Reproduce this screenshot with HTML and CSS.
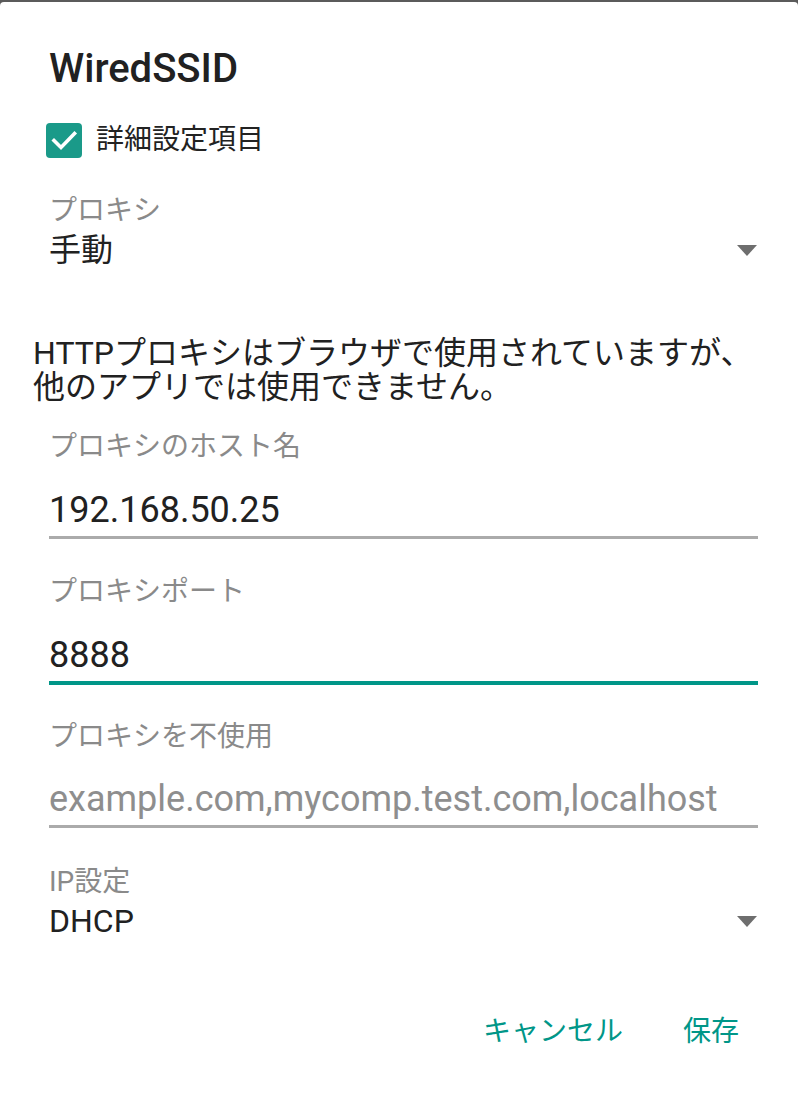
FILE: index.html
```html
<!DOCTYPE html>
<html lang="ja">
<head>
<meta charset="utf-8">
<title>WiredSSID</title>
<link rel="stylesheet" href="styles.css">
</head>
<body>
<div class="dialog">
  <h1 class="title">WiredSSID</h1>

  <label class="check-row">
    <span class="checkbox">
      <svg viewBox="0 0 36 36" width="36" height="36"><path d="M8 18.5 L15 25.5 L28.5 11.5" fill="none" stroke="#fff" stroke-width="3.6" stroke-linecap="square"/></svg>
    </span>
    <span class="check-label">詳細設定項目</span>
  </label>

  <div class="label label-proxy">プロキシ</div>
  <div class="spinner">
    <span class="spinner-value">手動</span>
    <span class="arrow"></span>
  </div>

  <div class="desc">
    <div class="desc-line">HTTPプロキシはブラウザで使用されていますが、</div>
    <div class="desc-line">他のアプリでは使用できません。</div>
  </div>

  <div class="label label-host">プロキシのホスト名</div>
  <div class="field field-host">192.168.50.25</div>

  <div class="label label-port">プロキシポート</div>
  <div class="field field-port focused">8888</div>

  <div class="label label-bypass">プロキシを不使用</div>
  <div class="field field-bypass hint">example.com,mycomp.test.com,localhost</div>

  <div class="label label-ip">IP設定</div>
  <div class="spinner spinner-ip">
    <span class="spinner-value">DHCP</span>
    <span class="arrow"></span>
  </div>

  <div class="buttons">
    <span class="btn">キャンセル</span>
    <span class="btn">保存</span>
  </div>
</div>
</body>
</html>
```

FILE: styles.css
```css
html, body {
  margin: 0;
  padding: 0;
}
body {
  background: #5b5b5b;
  font-family: Roboto, "Noto Sans CJK JP", sans-serif;
  color: #212121;
}
.dialog {
  margin-top: 2px;
  background: #ffffff;
  border-top-left-radius: 4px;
  border-top-right-radius: 4px;
  min-height: 1099px;
  box-sizing: border-box;
  padding: 0 40px 0 49px;
  display: flex;
  flex-direction: column;
  overflow: hidden;
}
.title {
  margin: 43px 0 0 0;
  font-size: 40px;
  line-height: 48px;
  font-weight: 500;
  color: #212121;
}
.check-row {
  margin-top: 29px;
  margin-left: -3px;
  display: flex;
  align-items: center;
  height: 36px;
}
.checkbox {
  width: 36px;
  height: 35px;
  border-radius: 4px;
  background: #1a9a89;
  display: flex;
  align-items: center;
  justify-content: center;
}
.checkbox svg {
  display: block;
}
.check-label {
  margin-left: 14px;
  font-size: 28px;
  line-height: 32px;
  color: #222222;
}
.label {
  font-size: 28px;
  line-height: 32px;
  color: #8a8a8a;
}
.label-proxy { margin-top: 37px; }
.spinner {
  margin-top: 3px;
  display: flex;
  align-items: center;
  justify-content: space-between;
  height: 40px;
}
.spinner-value {
  font-size: 32px;
  line-height: 40px;
  color: #212121;
}
.arrow {
  width: 0;
  height: 0;
  border-left: 10px solid transparent;
  border-right: 10px solid transparent;
  border-top: 11px solid #6e6e6e;
  margin-right: 1px;
}
.desc {
  margin: 66px 0 0 -16px;
  font-size: 32px;
  color: #212121;
  display: flex;
  flex-direction: column;
}
.desc-line {
  line-height: 34px;
  white-space: nowrap;
}
.label-host { margin-top: 27px; }
.field {
  margin-top: 25px;
  font-size: 36px;
  line-height: 44px;
  padding-bottom: 4px;
  border-bottom: 3px solid #ababab;
  color: #212121;
  white-space: nowrap;
}
.field.focused {
  border-bottom: 4px solid #009688;
}
.field.hint {
  color: #8e8e8e;
}
.label-port { margin-top: 37px; }
.label-bypass { margin-top: 36px; }
.field-bypass { margin-top: 24px; }
.label-ip { margin-top: 38px; }
.spinner-ip { margin-top: 3px; }
.buttons {
  margin-top: 75px;
  display: flex;
  justify-content: flex-end;
  gap: 60px;
  padding-right: 19px;
}
.btn {
  font-size: 28px;
  line-height: 32px;
  color: #009688;
}
```
